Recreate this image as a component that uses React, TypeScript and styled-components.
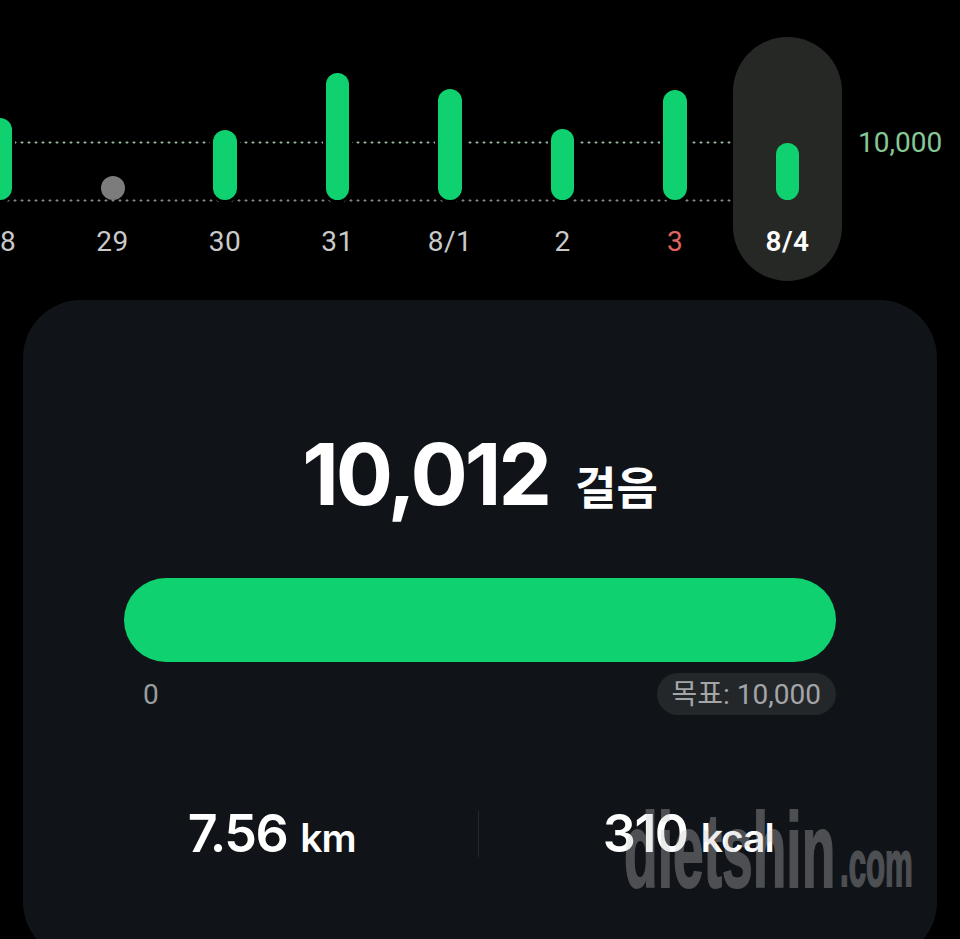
import React from "react";
import styled, { createGlobalStyle } from "styled-components";

const GlobalStyle = createGlobalStyle`
  html, body {
    margin: 0;
    padding: 0;
    background: #000;
  }
  body {
    font-family: Roboto, "Noto Sans CJK KR", sans-serif;
  }
`;

const Page = styled.main`
  position: relative;
  width: 960px;
  height: 939px;
  overflow: hidden;
  background: #000;
`;

const Chart = styled.section`
  position: relative;
  height: 300px;
  padding-top: 37px;
  box-sizing: border-box;
`;

const Columns = styled.div`
  display: flex;
  margin-left: -56.25px;
`;

const Column = styled.div<{ $active?: boolean }>`
  width: 112.5px;
  flex: none;
  height: 244px;
  display: flex;
  flex-direction: column;
  align-items: center;
  position: relative;
  ${(p) =>
    p.$active &&
    `
    width: 109px;
    margin: 0 1.75px;
    border-radius: 55px;
    background: #262826;
    z-index: 2;
  `}
`;

const BarSlot = styled.div`
  height: 163px;
  display: flex;
  align-items: flex-end;
`;

const Bar = styled.div<{ $height: number }>`
  width: 23.5px;
  height: ${(p) => p.$height}px;
  border-radius: 12px;
  background: #10d16f;
  box-shadow: 0 0 0 3px #000;
  position: relative;
  z-index: 1;
`;

const ActiveBar = styled(Bar)`
  box-shadow: none;
`;

const EmptyDot = styled.div`
  width: 24px;
  height: 24px;
  border-radius: 50%;
  background: #7c7c7c;
  position: relative;
  z-index: 1;
`;

const DayLabel = styled.span<{ $tone?: "red" | "active" }>`
  margin-top: 25px;
  font-size: 28px;
  line-height: 33px;
  letter-spacing: 0.5px;
  font-weight: ${(p) => (p.$tone === "active" ? 600 : 400)};
  color: ${(p) =>
    p.$tone === "red" ? "#e0645f" : p.$tone === "active" ? "#fff" : "#c9c9c9"};
`;

const GuideLine = styled.div<{ $top: number; $color: string; $over?: boolean }>`
  position: absolute;
  left: 0;
  top: ${(p) => p.$top}px;
  width: 731px;
  height: 3px;
  z-index: ${(p) => (p.$over ? 1 : 0)};
  background-image: radial-gradient(circle, ${(p) => p.$color} 1px, transparent 1.3px);
  background-size: 7px 3px;
  background-position: -2.5px 0;
`;

const GoalLabel = styled.span`
  position: absolute;
  left: 858px;
  top: 126px;
  font-size: 28px;
  line-height: 33px;
  font-weight: 400;
  color: #86c795;
`;

const Card = styled.section`
  margin: 0 23px;
  height: 660px;
  box-sizing: border-box;
  padding: 125px 101px 0;
  border-radius: 58px;
  background: #101418;
`;

const StepsRow = styled.div`
  display: flex;
  justify-content: center;
  align-items: baseline;
  gap: 26px;
  color: #fff;
  height: 101px;
  line-height: 100px;
`;

const StepsValue = styled.span`
  font-family: Inter, Roboto, sans-serif;
  font-size: 85px;
  font-weight: 700;
  letter-spacing: -3px;
`;

const StepsUnit = styled.span`
  font-family: "Noto Sans CJK KR", sans-serif;
  font-size: 45px;
  font-weight: 700;
`;

const Progress = styled.div`
  margin-top: 52px;
  height: 84px;
  border-radius: 42px;
  background: #10d16f;
`;

const ScaleRow = styled.div`
  margin-top: 11px;
  display: flex;
  justify-content: space-between;
  align-items: center;
`;

const ScaleStart = styled.span`
  margin-left: 19px;
  font-size: 28px;
  font-weight: 400;
  color: #9a9c9e;
`;

const GoalPill = styled.span`
  height: 42px;
  padding: 0 15px 4px;
  box-sizing: border-box;
  display: flex;
  align-items: center;
  border-radius: 21px;
  background: #24272a;
  font-size: 28px;
  font-weight: 400;
  color: #a3a5a7;
`;

const Stats = styled.div`
  margin: 87px -60px 0;
  display: grid;
  grid-template-columns: 1fr 1px 1fr;
  align-items: center;
`;

const Stat = styled.div`
  display: flex;
  justify-content: center;
  align-items: baseline;
  gap: 13px;
  color: #fff;
`;

const StatValue = styled.span`
  font-family: Inter, Roboto, sans-serif;
  font-size: 52px;
  font-weight: 600;
  letter-spacing: -1.5px;
`;

const StatUnit = styled.span`
  font-family: Inter, Roboto, sans-serif;
  font-size: 39px;
  font-weight: 600;
  letter-spacing: -1px;
`;

const Divider = styled.div`
  width: 1px;
  height: 46px;
  margin-left: -2px;
  background: #26292c;
`;

const Watermark = styled.div`
  position: absolute;
  left: 624px;
  top: 791px;
  color: #c8c8c8;
  opacity: 0.33;
  font-family: "Liberation Sans", Arial, sans-serif;
  font-weight: 700;
  white-space: nowrap;
  -webkit-text-stroke: 2px #c8c8c8;
  z-index: 3;
`;

const WatermarkName = styled.span`
  position: absolute;
  left: 0;
  top: 0;
  font-size: 106px;
  line-height: 118px;
  transform: scaleX(0.52);
  transform-origin: left top;
`;

const WatermarkDomain = styled.span`
  position: absolute;
  left: 216px;
  top: 29px;
  font-size: 65px;
  line-height: 87px;
  transform: scaleX(0.48);
  transform-origin: left top;
`;

type Day = {
  label: string;
  height?: number;
  tone?: "red" | "active";
};

const days: Day[] = [
  { label: "28", height: 82 },
  { label: "29" },
  { label: "30", height: 70 },
  { label: "31", height: 127 },
  { label: "8/1", height: 111 },
  { label: "2", height: 71 },
  { label: "3", height: 110, tone: "red" },
  { label: "8/4", height: 57, tone: "active" },
];

export default function App() {
  return (
    <Page>
      <GlobalStyle />
      <Chart>
        <GuideLine $top={141} $color="#8fb59a" />
        <GuideLine $top={198.5} $color="#858585" $over />
        <Columns>
          {days.map((day) => (
            <Column key={day.label} $active={day.tone === "active"}>
              <BarSlot>
                {day.height === undefined ? (
                  <EmptyDot />
                ) : day.tone === "active" ? (
                  <ActiveBar $height={day.height} />
                ) : (
                  <Bar $height={day.height} />
                )}
              </BarSlot>
              <DayLabel $tone={day.tone}>{day.label}</DayLabel>
            </Column>
          ))}
        </Columns>
        <GoalLabel>10,000</GoalLabel>
      </Chart>

      <Card>
        <StepsRow>
          <StepsValue>10,012</StepsValue>
          <StepsUnit>걸음</StepsUnit>
        </StepsRow>
        <Progress />
        <ScaleRow>
          <ScaleStart>0</ScaleStart>
          <GoalPill>목표: 10,000</GoalPill>
        </ScaleRow>
        <Stats>
          <Stat>
            <StatValue>7.56</StatValue>
            <StatUnit>km</StatUnit>
          </Stat>
          <Divider />
          <Stat>
            <StatValue>310</StatValue>
            <StatUnit>kcal</StatUnit>
          </Stat>
        </Stats>
      </Card>

      <Watermark>
        <WatermarkName>dietshin</WatermarkName>
        <WatermarkDomain>.com</WatermarkDomain>
      </Watermark>
    </Page>
  );
}
